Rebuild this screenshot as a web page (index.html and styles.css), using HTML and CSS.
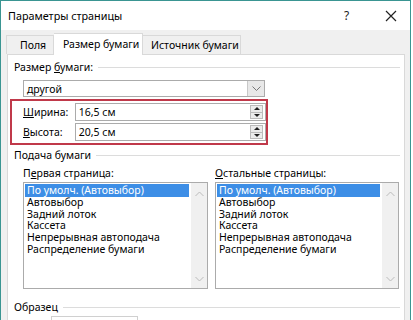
FILE: index.html
```html
<!DOCTYPE html>
<html lang="ru">
<head>
    <meta charset="UTF-8">
    <title>Параметры страницы</title>
    <link rel="stylesheet" href="styles.css">
</head>
<body>
    <div class="window">
        <div class="titlebar">
            <span class="title">Параметры страницы</span>
            <span class="help">?</span>
            <span class="close">
                <svg width="12" height="12" viewBox="0 0 12 12"><path d="M1 1 L11 11 M11 1 L1 11" stroke="#222" stroke-width="1.2"/></svg>
            </span>
        </div>

        <div class="tabs">
            <div class="tab">Поля</div>
            <div class="tab active">Размер бумаги</div>
            <div class="tab">Источник бумаги</div>
        </div>

        <div class="panel">
            <div class="group-title"><span>Размер <u>б</u>умаги:</span></div>

            <div class="select">
                <span class="select-value">другой</span>
                <span class="select-btn">
                    <svg width="9" height="6" viewBox="0 0 9 6"><path d="M0.5 0.5 L4.5 4.5 L8.5 0.5" fill="none" stroke="#777" stroke-width="1"/></svg>
                </span>
            </div>

            <div class="highlight">
                <div class="field">
                    <label><u>Ш</u>ирина:</label>
                    <div class="spin-input">
                        <span>16,5 см</span>
                        <span class="spin">
                            <span class="spin-up"></span>
                            <span class="spin-down"></span>
                        </span>
                    </div>
                </div>
                <div class="field">
                    <label><u>В</u>ысота:</label>
                    <div class="spin-input">
                        <span>20,5 см</span>
                        <span class="spin">
                            <span class="spin-up"></span>
                            <span class="spin-down"></span>
                        </span>
                    </div>
                </div>
            </div>

            <div class="group-title feed"><span>Подача бумаги</span></div>

            <div class="lists">
                <div class="list-col">
                    <div class="list-label">П<u>е</u>рвая страница:</div>
                    <div class="listbox">
                        <ul>
                            <li class="selected">По умолч. (Автовыбор)</li>
                            <li>Автовыбор</li>
                            <li>Задний лоток</li>
                            <li>Кассета</li>
                            <li>Непрерывная автоподача</li>
                            <li>Распределение бумаги</li>
                        </ul>
                        <div class="scroll">
                            <svg width="9" height="6" viewBox="0 0 9 6"><path d="M0.5 5 L4.5 1 L8.5 5" fill="none" stroke="#bbb" stroke-width="1"/></svg>
                            <svg width="9" height="6" viewBox="0 0 9 6"><path d="M0.5 1 L4.5 5 L8.5 1" fill="none" stroke="#bbb" stroke-width="1"/></svg>
                        </div>
                    </div>
                </div>
                <div class="list-col">
                    <div class="list-label"><u>О</u>стальные страницы:</div>
                    <div class="listbox">
                        <ul>
                            <li class="selected">По умолч. (Автовыбор)</li>
                            <li>Автовыбор</li>
                            <li>Задний лоток</li>
                            <li>Кассета</li>
                            <li>Непрерывная автоподача</li>
                            <li>Распределение бумаги</li>
                        </ul>
                        <div class="scroll">
                            <svg width="9" height="6" viewBox="0 0 9 6"><path d="M0.5 5 L4.5 1 L8.5 5" fill="none" stroke="#bbb" stroke-width="1"/></svg>
                            <svg width="9" height="6" viewBox="0 0 9 6"><path d="M0.5 1 L4.5 5 L8.5 1" fill="none" stroke="#bbb" stroke-width="1"/></svg>
                        </div>
                    </div>
                </div>
            </div>

            <div class="group-title sample"><span>Образец</span></div>
            <div class="preview"></div>
        </div>
    </div>
</body>
</html>
```

FILE: styles.css
```css
body {
    margin: 0;
    font-family: "Noto Sans", "Liberation Sans", sans-serif;
    font-size: 10.5px;
    color: #000;
    background: #fff;
}

.window {
    width: 409px;
    height: 319px;
    border: 1px solid #3a9592;
    border-bottom: none;
    background: #f0f0f0;
    overflow: hidden;
}

.titlebar {
    display: flex;
    align-items: center;
    height: 29px;
    background: #fff;
    padding-left: 7px;
}

.title {
    flex: 1;
    font-size: 10.8px;
}

.help {
    width: 14px;
    margin-right: 27px;
    font-size: 12px;
    color: #222;
}

.close {
    display: flex;
    margin-right: 13px;
}

.tabs {
    display: flex;
    align-items: flex-end;
    height: 24px;
    padding-left: 5px;
}

.tab {
    height: 19px;
    line-height: 18px;
    padding-left: 9px;
    border: 1px solid #d9d9d9;
    border-bottom: none;
    box-sizing: border-box;
    white-space: nowrap;
}

.tab:first-child {
    width: 48px;
    padding-left: 13px;
}

.tab.active {
    width: 89px;
    height: 22px;
    background: #fff;
    line-height: 20px;
    border-left: none;
    position: relative;
    top: 1px;
}

.tab:last-child {
    width: 98px;
    border-left: none;
    padding-left: 8px;
}

.panel {
    margin-left: 6px;
    width: 396px;
    height: 280px;
    background: #fff;
    border: 1px solid #d9d9d9;
    padding-top: 4px;
}

.group-title {
    display: flex;
    align-items: center;
    gap: 5px;
    padding-left: 6px;
    margin-right: 4px;
    height: 16px;
}

.group-title::after {
    content: "";
    flex: 1;
    height: 1px;
    background: #dcdcdc;
}

.select {
    display: flex;
    align-items: center;
    margin: 5px 0 0 15px;
    width: 242px;
    height: 17px;
    border: 1px solid #ababab;
    box-sizing: border-box;
}

.select-value {
    flex: 1;
    padding-left: 3px;
}

.select-btn {
    display: flex;
    align-items: center;
    justify-content: center;
    width: 16px;
    height: 15px;
    background: #e8e8e8;
    border-left: 1px solid #c8c8c8;
}

.highlight {
    margin: 2px 0 0 2px;
    width: 258px;
    height: 46px;
    border: 2px solid #c0394a;
    box-sizing: border-box;
    padding: 2px 0 0 11px;
    display: flex;
    flex-direction: column;
    gap: 2px;
}

.field {
    display: flex;
    align-items: center;
    height: 18px;
}

.field label {
    width: 52px;
}

.spin-input {
    display: flex;
    align-items: center;
    width: 192px;
    height: 18px;
    border: 1px solid #ababab;
    box-sizing: border-box;
    padding-left: 3px;
}

.spin-input > span:first-child {
    flex: 1;
}

.spin {
    display: flex;
    flex-direction: column;
    width: 13px;
    height: 14px;
    margin-right: 2px;
    border: 1px solid #bcbcbc;
    background: #ececec;
    box-sizing: border-box;
}

.spin-up,
.spin-down {
    flex: 1;
    display: flex;
    align-items: center;
    justify-content: center;
}

.spin-up {
    border-bottom: 1px solid #bcbcbc;
}

.spin-up::before {
    content: "";
    border-left: 3px solid transparent;
    border-right: 3px solid transparent;
    border-bottom: 3px solid #222;
}

.spin-down::before {
    content: "";
    border-left: 3px solid transparent;
    border-right: 3px solid transparent;
    border-top: 3px solid #222;
}

.group-title.feed {
    margin-top: 2px;
}

.lists {
    display: flex;
    gap: 7px;
    margin: 2px 0 0 15px;
}

.list-col {
    width: 185px;
}

.list-col:last-child {
    width: 184px;
}

.list-label {
    height: 16px;
    line-height: 16px;
    margin-bottom: 1px;
}

.listbox {
    display: flex;
    height: 107px;
    border: 1px solid #ababab;
    box-sizing: border-box;
}

.listbox ul {
    flex: 1;
    list-style: none;
    margin: 0;
    padding: 1px 0 0 1px;
}

.listbox li {
    height: 11.7px;
    line-height: 11.7px;
    padding-left: 2px;
    white-space: nowrap;
}

.listbox li.selected {
    background: #3d8ee6;
    color: #fff;
    height: 13px;
    line-height: 13px;
    margin-right: 2px;
}

.scroll {
    width: 16px;
    background: #f0f0f0;
    display: flex;
    flex-direction: column;
    justify-content: space-between;
    align-items: center;
    padding: 8px 0 6px;
}

.group-title.sample {
    margin-top: 10px;
}

.preview {
    margin: 1px 0 0 43px;
    width: 85px;
    height: 20px;
    border: 1px solid #d0d0d0;
    border-bottom: none;
}
```
